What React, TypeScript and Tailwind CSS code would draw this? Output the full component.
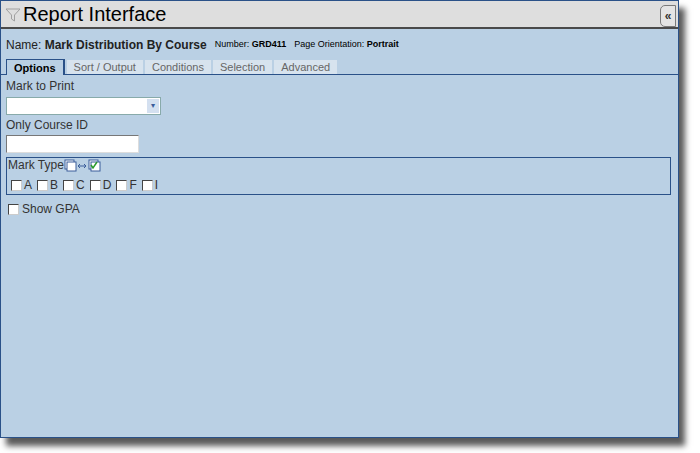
export default function App() {
  const tabs = ["Sort / Output", "Conditions", "Selection", "Advanced"];
  return (
    <div className="h-[453px] w-[700px] bg-white" style={{ fontFamily: "Arial, 'Liberation Sans', sans-serif" }}>
      <div className="relative h-[438px] w-[679px] border border-[#2a5188] bg-[#bad0e4] shadow-[6px_8px_6px_rgba(0,0,0,0.65)]">
        <div className="flex h-[28px] items-center border-b-2 border-[#4a4a4a] bg-[#dedede] pl-[4px]">
          <svg width="16" height="16" viewBox="0 0 16 16" className="mr-[2px] mt-[1px]">
            <path d="M1 2 H15 L9.5 8 V14 L6.5 12 V8 Z" fill="none" stroke="#a0a0a0" strokeWidth="1" />
          </svg>
          <span className="text-[20px] leading-none text-black">Report Interface</span>
          <div className="absolute right-[2px] top-[4px] flex h-[22px] w-[16px] items-center justify-center rounded-l-[5px] border border-[#7a7a7a] bg-[#e4e4e4] text-[12px] font-bold leading-none text-[#333]">«</div>
        </div>
        <div className="flex h-[30px] items-center gap-[8px] pl-[5px] pt-[2px] text-black">
          <span className="text-[12px] text-[#222]">Name: <b className="text-[12px]">Mark Distribution By Course</b></span>
          <span className="text-[9px]">Number: <b>GRD411</b></span>
          <span className="text-[9px]">Page Orientation: <b>Portrait</b></span>
        </div>
        <div className="flex h-[16px] items-end border-b border-[#2a5188] pl-[5px]">
          <div className="-mb-px h-[16px] border-r-2 border-t border-l border-[#2a5188] border-b-0 bg-[#bad0e4] px-[7px] text-[11px] font-bold leading-[16px]">Options</div>
          {tabs.map((t) => (
            <div key={t} className="ml-[2px] h-[14px] bg-[#d7e3ee] px-[7px] text-[11px] leading-[14px] text-[#666]">{t}</div>
          ))}
        </div>
        <div className="pl-[5px] text-[12px] text-[#333]">
          <div className="mt-[4px] leading-[14px]">Mark to Print</div>
          <div className="mt-[4px] flex h-[18px] w-[155px] items-center justify-end border border-[#8aa] bg-white">
            <div className="mr-[1px] flex h-[14px] w-[12px] items-center justify-center bg-[#d4e0f0] text-[8px] text-[#3a5c9a]">▾</div>
          </div>
          <div className="mt-[3px] leading-[14px]">Only Course ID</div>
          <div className="mt-[3px] h-[18px] w-[133px] border border-[#777] border-r-[#ddd] border-b-[#ddd] bg-white" />
          <div className="mr-[7px] mt-[4px] h-[38px] border border-[#2a5188] pl-[1px]">
            <div className="flex items-center leading-[14px]">
              Mark Type
              <svg width="40" height="14" viewBox="0 0 40 14">
                <rect x="1" y="2" width="9" height="9" fill="#fff" stroke="#3a5c9a" />
                <rect x="3" y="4" width="9" height="9" fill="#fff" stroke="#3a5c9a" />
                <path d="M14 8 H22 M16 6 L14 8 L16 10 M20 6 L22 8 L20 10" stroke="#3a5c9a" fill="none" />
                <rect x="25" y="2" width="9" height="9" fill="#fff" stroke="#3a5c9a" />
                <rect x="27" y="4" width="9" height="9" fill="#fff" stroke="#3a5c9a" />
                <path d="M27 7 L29 10 L33 4" stroke="#2a9a2a" strokeWidth="1.5" fill="none" />
              </svg>
            </div>
            <div className="mt-[4px] flex items-center gap-[4px] pl-[3px]">
              {["A", "B", "C", "D", "F", "I"].map((l) => (
                <span key={l} className="flex items-center gap-[2px] pr-[1px]">
                  <span className="h-[11px] w-[11px] border border-[#444] border-r-[#ccc] border-b-[#ccc] bg-white" />
                  {l}
                </span>
              ))}
            </div>
          </div>
          <div className="mt-[5px] flex items-center gap-[3px] pl-[2px]">
            <span className="h-[11px] w-[11px] border border-[#444] border-r-[#ccc] border-b-[#ccc] bg-white" />
            Show GPA
          </div>
        </div>
      </div>
    </div>
  );
}
